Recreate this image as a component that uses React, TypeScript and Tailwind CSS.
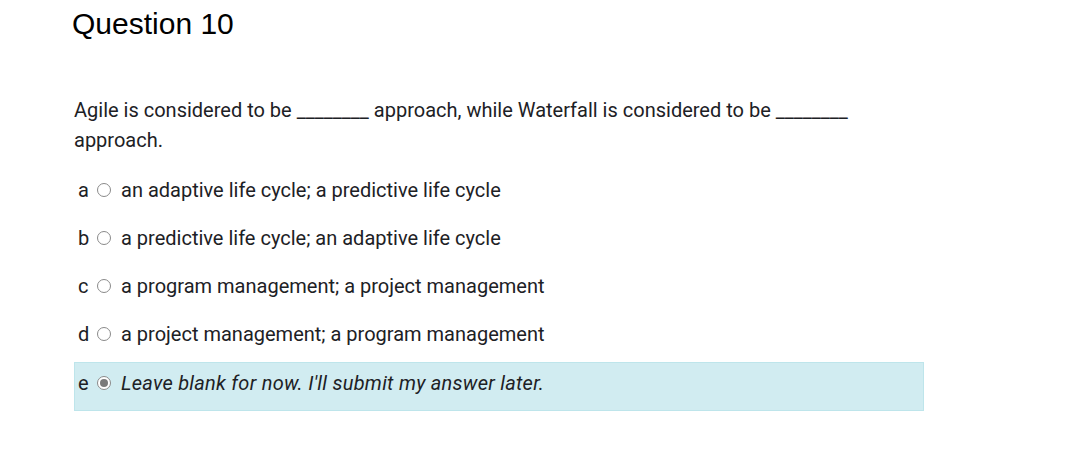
import React from "react";

const options = [
  { letter: "a", text: "an adaptive life cycle; a predictive life cycle" },
  { letter: "b", text: "a predictive life cycle; an adaptive life cycle" },
  { letter: "c", text: "a program management; a project management" },
  { letter: "d", text: "a project management; a program management" },
];

function Radio({ checked = false }: { checked?: boolean }) {
  return (
    <span className="ml-[7px] mr-[10px] flex h-[14px] w-[14px] flex-shrink-0 items-center justify-center rounded-full border border-[#8a8a8a] bg-white">
      {checked && <span className="h-[8px] w-[8px] rounded-full bg-[#7a7a7a]" />}
    </span>
  );
}

export default function App() {
  return (
    <div className="min-h-[465px] w-full bg-white text-[#1d2125]">
      <div className="pl-[72px] pt-[6px]">
        <h2 className="font-['Liberation_Sans',Arial,sans-serif] text-[30px] leading-[36px] text-black">Question 10</h2>
      </div>

      <div className="w-[924px] pl-[74px] pt-[53px] font-['Roboto',sans-serif] text-[20px]">
        <p className="leading-[30px]">
          Agile is considered to be ________ approach, while Waterfall is considered to be ________ approach.
        </p>

        <div className="mt-[11px] w-[850px]">
          {options.map((o) => (
            <div key={o.letter} className="flex h-[48px] items-center pl-[4px]">
              <span className="w-[12px]">{o.letter}</span>
              <Radio />
              <span>{o.text}</span>
            </div>
          ))}
          <div className="mt-[4px] flex h-[49px] items-center border border-[#bee5eb] bg-[#d1ecf1] pb-[8px] pl-[3px]">
            <span className="w-[12px]">e</span>
            <Radio checked />
            <span className="italic tracking-[0.26px]">Leave blank for now. I'll submit my answer later.</span>
          </div>
        </div>
      </div>
    </div>
  );
}
